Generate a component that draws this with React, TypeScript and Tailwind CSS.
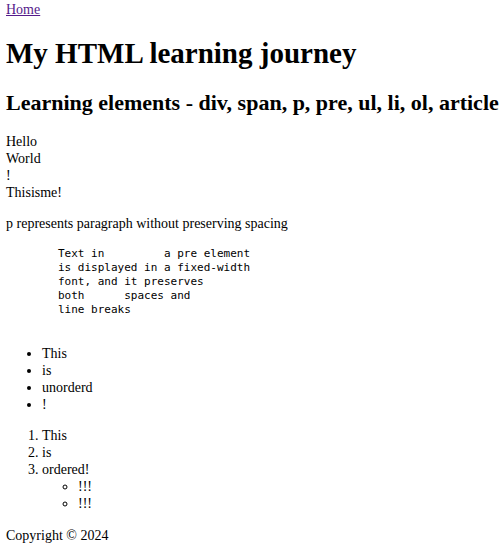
const lines = [
  "Text in         a pre element",
  "is displayed in a fixed-width",
  "font, and it preserves",
  "both      spaces and",
  "line breaks",
];

export default function App() {
  return (
    <div className="bg-white px-1.5 pb-3 font-['Liberation_Serif','Times_New_Roman',serif] text-sm leading-[17px] text-black">
      <nav className="pt-px">
        <a href="#home" className="text-[#551a8b] underline">Home</a>
      </nav>
      <main>
        <h1 className="mt-4 text-[29px] leading-[38px] font-bold">My HTML learning journey</h1>
        <h2 className="mt-4 text-[22px] leading-[29px] font-bold whitespace-nowrap">
          Learning elements - div, span, p, pre, ul, li, ol, article
        </h2>
        <div className="mt-4">
          <div>Hello</div>
          <div>World</div>
          <div>!</div>
          <span>This</span><span>is</span><span>me!</span>
        </div>
        <p className="mt-3.5">p represents paragraph without preserving spacing</p>
        <pre className="mt-[15px] pl-[52px] font-['DejaVu_Sans_Mono',monospace] text-[11px] leading-[14px]">
          {lines.join("\n")}
        </pre>
        <article className="mt-7">
          <ul className="list-disc pl-9">
            <li>This</li>
            <li>is</li>
            <li>unorderd</li>
            <li>!</li>
          </ul>
          <ol className="mt-3.5 list-decimal pl-9">
            <li>This</li>
            <li>is</li>
            <li>
              ordered!
              <ul className="list-[circle] pl-9">
                <li>!!!</li>
                <li>!!!</li>
              </ul>
            </li>
          </ol>
        </article>
      </main>
      <footer className="mt-[15px]">Copyright © 2024</footer>
    </div>
  );
}
